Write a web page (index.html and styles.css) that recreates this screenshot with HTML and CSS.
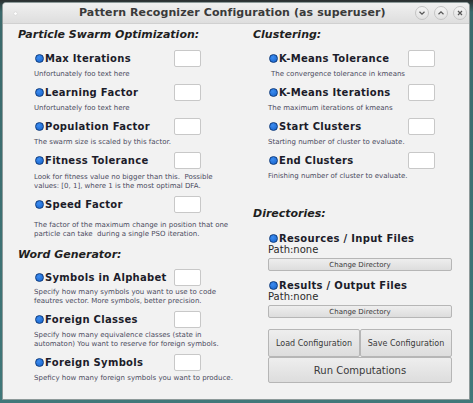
FILE: index.html
```html
<!DOCTYPE html>
<html>
<head>
<meta charset="utf-8">
<link rel="stylesheet" href="styles.css">
</head>
<body>
<div class="window">
  <div class="titlebar">
    <span class="dot"></span>
    <span class="title">Pattern Recognizer Configuration (as superuser)</span>
    <div class="wbtns">
      <span class="wbtn"><svg width="8" height="8" viewBox="0 0 8 8"><path d="M1.5 2.8 L4 5.2 L6.5 2.8" fill="none" stroke="#555" stroke-width="1.2"/></svg></span>
      <span class="wbtn"><svg width="8" height="8" viewBox="0 0 8 8"><path d="M1.5 5.2 L4 2.8 L6.5 5.2" fill="none" stroke="#555" stroke-width="1.2"/></svg></span>
      <span class="wbtn"><svg width="8" height="8" viewBox="0 0 8 8"><path d="M2 2 L6 6 M6 2 L2 6" fill="none" stroke="#555" stroke-width="1.2"/></svg></span>
    </div>
  </div>
  <div class="content">
    <div class="col left">
      <h2 class="sect">Particle Swarm Optimization:</h2>
      <div class="item">
        <div class="row"><span class="bullet"></span><span class="label">Max Iterations</span><span class="input"></span></div>
        <div class="desc">Unfortunately foo text here</div>
      </div>
      <div class="item">
        <div class="row"><span class="bullet"></span><span class="label">Learning Factor</span><span class="input"></span></div>
        <div class="desc">Unfortunately foo text here</div>
      </div>
      <div class="item">
        <div class="row"><span class="bullet"></span><span class="label">Population Factor</span><span class="input"></span></div>
        <div class="desc">The swarm size is scaled by this factor.</div>
      </div>
      <div class="item">
        <div class="row"><span class="bullet"></span><span class="label">Fitness Tolerance</span><span class="input"></span></div>
        <div class="desc gap4">Look for fitness value no bigger than this.&nbsp; Possible<br>values: [0, 1], where 1 is the most optimal DFA.</div>
      </div>
      <div class="item">
        <div class="row"><span class="bullet"></span><span class="label">Speed Factor</span><span class="input"></span></div>
        <div class="desc gap8">The factor of the maximum change in position that one<br>particle can take&nbsp; during a single PSO iteration.</div>
      </div>
      <h2 class="sect sect2">Word Generator:</h2>
      <div class="item">
        <div class="row"><span class="bullet"></span><span class="label">Symbols in Alphabet</span><span class="input"></span></div>
        <div class="desc gap2">Specify how many symbols you want to use to code<br>feautres vector. More symbols, better precision.</div>
      </div>
      <div class="item">
        <div class="row"><span class="bullet"></span><span class="label">Foreign Classes</span><span class="input"></span></div>
        <div class="desc gap3">Specify how many equivalence classes (state in<br>automaton) You want to reserve for foreign symbols.</div>
      </div>
      <div class="item">
        <div class="row"><span class="bullet"></span><span class="label">Foreign Symbols</span><span class="input"></span></div>
        <div class="desc">Speficy how many foreign symbols you want to produce.</div>
      </div>
    </div>
    <div class="col right">
      <h2 class="sect">Clustering:</h2>
      <div class="item">
        <div class="row"><span class="bullet"></span><span class="label">K-Means Tolerance</span><span class="input"></span></div>
        <div class="desc indent">The convergence tolerance in kmeans</div>
      </div>
      <div class="item">
        <div class="row"><span class="bullet"></span><span class="label">K-Means Iterations</span><span class="input"></span></div>
        <div class="desc">The maximum iterations of kmeans</div>
      </div>
      <div class="item">
        <div class="row"><span class="bullet"></span><span class="label">Start Clusters</span><span class="input"></span></div>
        <div class="desc">Starting number of cluster to evaluate.</div>
      </div>
      <div class="item">
        <div class="row"><span class="bullet"></span><span class="label">End Clusters</span><span class="input"></span></div>
        <div class="desc">Finishing number of cluster to evaluate.</div>
      </div>
      <h2 class="sect sect3">Directories:</h2>
      <div class="dir">
        <div class="dirlabel"><span class="bullet"></span><span class="label">Resources / Input Files</span></div>
        <div class="path">Path:none</div>
        <button class="btn small">Change Directory</button>
      </div>
      <div class="dir">
        <div class="dirlabel"><span class="bullet"></span><span class="label">Results / Output Files</span></div>
        <div class="path">Path:none</div>
        <button class="btn small">Change Directory</button>
      </div>
      <div class="actions">
        <div class="pair">
          <button class="btn mid">Load Configuration</button>
          <button class="btn mid">Save Configuration</button>
        </div>
        <button class="btn big">Run Computations</button>
      </div>
    </div>
  </div>
</div>
</body>
</html>
```
FILE: styles.css
```css
html, body {
  margin: 0;
  padding: 0;
}
body {
  width: 473px;
  height: 403px;
  background: linear-gradient(180deg, #2b2f30 0px, #3b6a6c 12px, #40787a 100%);
  font-family: "DejaVu Sans", "Liberation Sans", sans-serif;
  overflow: hidden;
}
.window {
  margin: 2px 0 0 2px;
  width: 466px;
  height: 396px;
  border: 1px solid #8e9a9a;
  border-radius: 4px 4px 0 0;
  background: #f2f2f2;
  display: flex;
  flex-direction: column;
  overflow: hidden;
}
.titlebar {
  height: 20px;
  flex: none;
  display: flex;
  align-items: center;
  background: linear-gradient(180deg, #f0f0f0, #dedede);
  border-bottom: 1px solid #d0d0d0;
  position: relative;
}
.dot {
  width: 3px;
  height: 3px;
  border-radius: 50%;
  background: #fff;
  margin-left: 11px;
  box-shadow: 0 0 1px #aaa;
}
.title {
  position: absolute;
  left: 76px;
  top: 3px;
  font-size: 11px;
  color: #3a3a3a;
  font-weight: bold;
  letter-spacing: 0.1px;
}
.wbtns {
  margin-left: auto;
  margin-right: 2px;
  display: flex;
  gap: 5px;
}
.wbtn {
  width: 14px;
  height: 14px;
  border-radius: 50%;
  background: linear-gradient(180deg, #f4f4f4, #e2e2e2);
  border: 1px solid #c4c4c4;
  display: flex;
  align-items: center;
  justify-content: center;
  box-sizing: border-box;
}
.content {
  flex: 1;
  display: grid;
  grid-template-columns: 235px 1fr;
  padding-left: 15px;
}
.col {
  display: flex;
  flex-direction: column;
}
.sect {
  margin: 0;
  font-size: 11px;
  font-weight: bold;
  font-style: italic;
  color: #1f1f1f;
  height: 13px;
  line-height: 13px;
  margin-top: 4px;
  margin-bottom: 9px;
}
.sect2 {
  margin-top: 4px;
  margin-bottom: 8px;
}
.sect3 {
  margin-top: 21px;
  margin-bottom: 12px;
}
.item {
  margin-left: 16px;
  width: 167px;
  margin-bottom: 5px;
}
.right .item {
  margin-left: 15px;
}
.row {
  display: flex;
  align-items: center;
  height: 17px;
}
.bullet {
  width: 7px;
  height: 7px;
  border-radius: 50%;
  background: radial-gradient(circle at 40% 35%, #3c8cf0, #1460c8);
  border: 1px solid #0d3c80;
  flex: none;
  margin-left: 1px;
  margin-right: 1px;
}
.label {
  font-size: 10px;
  font-weight: bold;
  color: #1c1c2a;
  letter-spacing: 0.3px;
}
.input {
  margin-left: auto;
  width: 25px;
  height: 15px;
  background: #fff;
  border: 1px solid #c8c8c8;
  border-radius: 2px;
  flex: none;
}
.desc {
  font-size: 7px;
  line-height: 9px;
  color: #4b4b5e;
  margin-top: 3px;
  white-space: nowrap;
}
.desc.gap2 { margin-top: 2px; }
.desc.gap3 { margin-top: 3px; }
.desc.gap4 { margin-top: 4px; }
.desc.gap8 { margin-top: 8px; }
.desc.indent { padding-left: 3px; }
.dir {
  margin-left: 15px;
  width: 184px;
  display: flex;
  flex-direction: column;
  margin-bottom: 8px;
}
.dirlabel {
  display: flex;
  align-items: center;
  height: 12px;
}
.path {
  font-size: 10px;
  line-height: 12px;
  color: #2a2a2a;
  height: 12px;
}
.btn {
  font-family: "DejaVu Sans", "Liberation Sans", sans-serif;
  background: linear-gradient(180deg, #eeeeee, #dddddd);
  border: 1px solid #b6b6b6;
  border-radius: 2px;
  color: #3a3a3a;
  padding: 0;
  margin: 0;
  box-sizing: border-box;
}
.btn.small {
  height: 13px;
  font-size: 7px;
  margin-top: 2px;
  width: 184px;
}
.actions {
  margin-left: 15px;
  width: 184px;
  margin-top: 3px;
  display: flex;
  flex-direction: column;
}
.pair {
  display: flex;
}
.btn.mid {
  width: 92px;
  height: 28px;
  font-size: 8px;
}
.btn.big {
  height: 26px;
  font-size: 10px;
  width: 184px;
}
```
